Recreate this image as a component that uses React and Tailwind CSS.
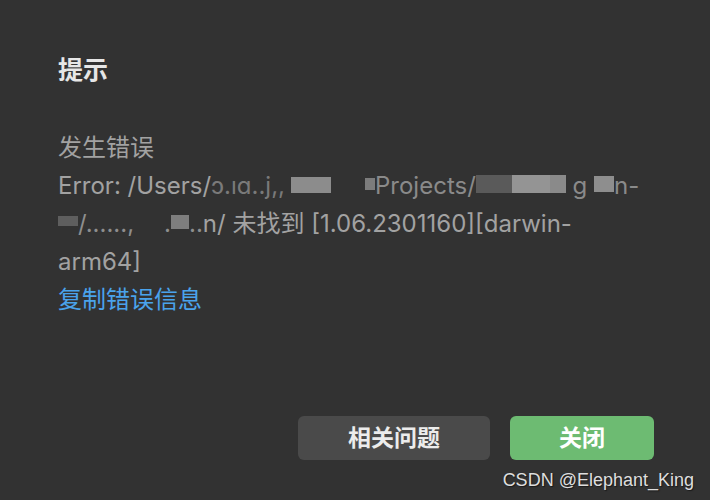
const Blk = ({ className }) => <span className={`inline-block align-middle ${className}`} />;

export default function App() {
  return (
    <div
      className="relative w-[710px] h-[500px] bg-[#323232] overflow-hidden"
      style={{ fontFamily: 'Inter, "Noto Sans CJK SC", sans-serif' }}
    >
      <div className="pl-[58px] pr-[56px] pt-[52px]">
        <h1 className="text-[25px] leading-[36px] font-bold text-[#e6e6e6]">提示</h1>

        <div className="mt-[41px] text-[24px] leading-[38px] text-[#a2a2a2]">
          <p>发生错误</p>
          <p className="whitespace-nowrap">
            Error: /Users/<span className="text-[#7a7a7a]">ɔ.ıɑ..j,,</span>
            <Blk className="ml-[6px] w-[40px] h-[16px] bg-[#8c8c8c] -mt-[4px]" />
            <Blk className="ml-[34px] w-[10px] h-[12px] bg-[#7c7c7c] -mt-[6px]" />
            <span className="text-[#8a8a8a]">Projects/</span>
            <Blk className="w-[36px] h-[18px] bg-[#5a5a5a] -mt-[6px]" />
            <Blk className="w-[38px] h-[18px] bg-[#949494] -mt-[6px]" />
            <Blk className="w-[16px] h-[18px] bg-[#8a8a8a] -mt-[6px]" />
            <span className="text-[#8a8a8a]"> g </span>
            <Blk className="w-[20px] h-[16px] bg-[#8e8e8e] -mt-[6px]" />
            <span className="text-[#8a8a8a]">n-</span>
          </p>
          <p className="whitespace-nowrap">
            <Blk className="w-[20px] h-[10px] bg-[#5e5e5e] -mt-[8px]" />
            <span className="text-[#8e8e8e]">/......,</span>
            <span className="ml-[30px] text-[#8e8e8e]">.</span>
            <Blk className="w-[18px] h-[14px] bg-[#7e7e7e] -mt-[6px]" />
            <span className="text-[#8e8e8e]">..</span>n/ 未找到 [1.06.2301160][darwin-
          </p>
          <p>arm64]</p>
          <p className="text-[#4aa3ec] cursor-pointer">复制错误信息</p>
        </div>
      </div>

      <div className="absolute left-0 right-[56px] top-[416px] flex justify-end gap-[20px]">
        <button className="w-[192px] h-[44px] rounded-[6px] bg-[#4a4a4a] text-[23px] font-bold text-[#ececec]">
          相关问题
        </button>
        <button className="w-[144px] h-[44px] rounded-[6px] bg-[#6dbb72] text-[23px] font-bold text-white">
          关闭
        </button>
      </div>

      <span
        className="absolute right-[16px] top-[468px] text-[18px] leading-[24px] text-[#dedede]"
        style={{ fontFamily: '"Liberation Sans", sans-serif', textShadow: "1px 1px 1px #1a1a1a" }}
      >
        CSDN @Elephant_King
      </span>
    </div>
  );
}
